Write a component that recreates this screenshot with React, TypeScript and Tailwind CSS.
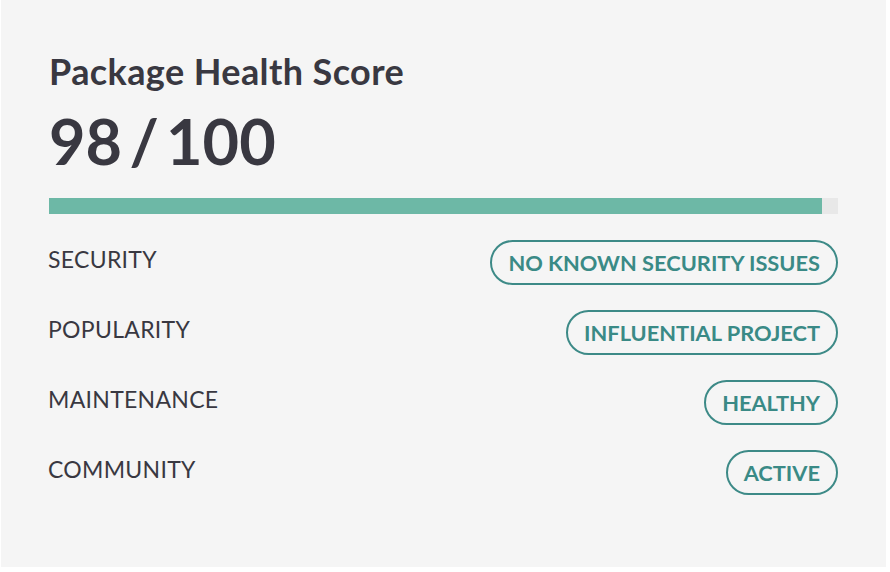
import React from "react";

const rows = [
  { label: "SECURITY", badge: "NO KNOWN SECURITY ISSUES" },
  { label: "POPULARITY", badge: "INFLUENTIAL PROJECT" },
  { label: "MAINTENANCE", badge: "HEALTHY" },
  { label: "COMMUNITY", badge: "ACTIVE" },
];

export default function App() {
  return (
    <div className="w-[890px] h-[572px] bg-white" style={{ fontFamily: "Lato, 'Open Sans', sans-serif" }}>
      <div className="ml-[1px] w-[885px] h-[567px] bg-[#f5f5f5] pl-[48px] pr-[48px] pt-[48px]">
        <h2 className="text-[36px] leading-[46px] font-bold text-[#393841] tracking-[0.4px]">Package Health Score</h2>
        <div className="mt-[7px] text-[63px] leading-[80px] font-bold text-[#393841] [word-spacing:-8px]">98 / 100</div>
        <div className="mt-[17px] h-[16px] bg-[#e8e8e8]">
          <div className="h-full bg-[#6db8a6]" style={{ width: "98%" }} />
        </div>
        <div className="mt-[26px] flex flex-col gap-[25px]">
          {rows.map((r) => (
            <div key={r.label} className="flex items-center justify-between h-[45px]">
              <span className="text-[23px] text-[#393841] -mt-[6px] -ml-[1px] tracking-[0.3px]">{r.label}</span>
              <span className="h-[45px] flex items-center pt-[2px] px-[16px] rounded-full border-2 border-[#3d8a87] text-[#3a8a86] text-[21.8px] font-bold">
                {r.badge}
              </span>
            </div>
          ))}
        </div>
      </div>
    </div>
  );
}
